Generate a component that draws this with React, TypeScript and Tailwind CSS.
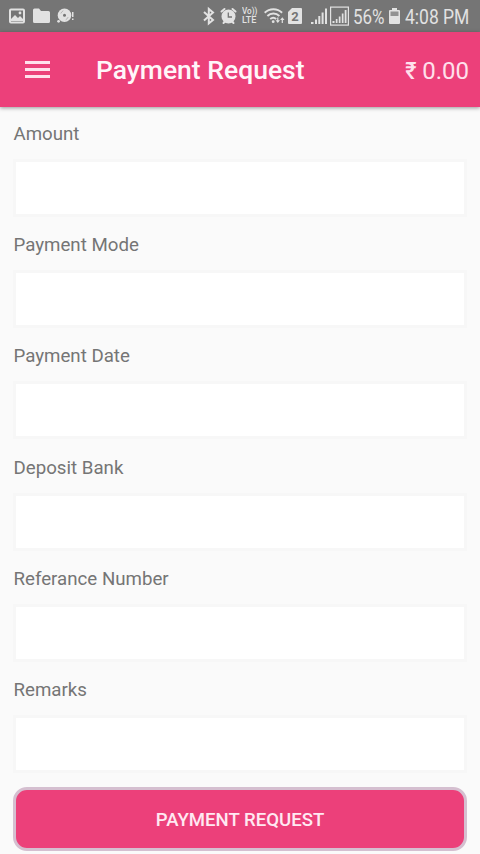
const fields = ['Amount', 'Payment Mode', 'Payment Date', 'Deposit Bank', 'Referance Number', 'Remarks'];

function StatusBar() {
  return (
    <div className="flex h-8 shrink-0 items-center bg-[#757575] text-[#e2e2e2]">
      <svg className="ml-[9px] h-8 w-4" viewBox="0 0 16 32" fill="none">
        <rect x="1" y="9.500" width="14" height="13" rx="1" stroke="currentColor" strokeWidth="2" />
        <path d="M2 21v-2l4-4 3 3 2-2 3 3v2z" fill="currentColor" />
        <circle cx="11" cy="13" r="1.400" fill="currentColor" />
      </svg>
      <svg className="ml-2 h-8 w-[17px]" viewBox="0 0 17 32" fill="currentColor">
        <path d="M1.500 8.500H6l2 2.500h7.500a1.500 1.500 0 0 1 1.500 1.500v9a1.500 1.500 0 0 1-1.500 1.500h-14A1.500 1.500 0 0 1 0 21.500V10a1.500 1.500 0 0 1 1.500-1.500z" />
      </svg>
      <svg className="ml-[7px] h-8 w-[17px]" viewBox="0 0 17 32" fill="currentColor">
        <circle cx="7.500" cy="15.300" r="6.800" />
        <circle cx="7.500" cy="15.300" r="1.500" fill="#757575" />
        <path d="M3.800 13.500q.8-2 2.500-2.800M11.200 17q-.8 2-2.500 2.800" stroke="#757575" strokeWidth=".4" fill="none" />
        <circle cx="1.600" cy="21.300" r="1.400" />
        <rect x="15" y="12" width="1.500" height="5" />
        <rect x="15" y="18.500" width="1.500" height="1.500" />
      </svg>
      <svg className="ml-auto h-8 w-3" viewBox="0 0 12 32" fill="none" stroke="currentColor" strokeWidth="2">
        <path d="M1 12l9 7.900-4.200 3.500V8.900l4.200 3.500L1 20.400" />
      </svg>
      <svg className="ml-[5px] h-8 w-[17px]" viewBox="0 0 17 32" fill="currentColor">
        <circle cx="8.500" cy="16.500" r="7" />
        <path d="M1.500 11.500l3-2.500M15.500 11.500l-3-2.500M3.500 23l2-2M13.500 23l-2-2" stroke="currentColor" strokeWidth="2" strokeLinecap="round" />
        <path d="M8.300 12.500v4.500H12" fill="none" stroke="#757575" strokeWidth="1.300" />
      </svg>
      <div className="ml-[5px] flex w-4 flex-col items-start text-[9px] leading-[9px] font-medium">
        <span className="origin-left scale-x-[0.9] whitespace-nowrap">Vo))</span>
        <span className="whitespace-nowrap">LTE</span>
      </div>
      <svg className="ml-[6px] h-8 w-[21px]" viewBox="0 0 21 32" fill="none" stroke="currentColor" strokeWidth="1.900">
        <path d="M.7 12.700a12.500 12.500 0 0 1 17.400 0M3.400 16a8.500 8.500 0 0 1 12 0M6.200 19a4.600 4.600 0 0 1 6 0" />
        <circle cx="9.200" cy="21.700" r="1.400" fill="currentColor" stroke="none" />
        <path d="M13.800 17.500v3.500M18.300 20v3" strokeWidth="1.200" />
        <path d="M11.600 20.200H16l-2.200 2.800zM16.100 20h4.400l-2.200-2.700z" fill="currentColor" stroke="none" />
      </svg>
      <svg className="ml-[3px] h-8 w-[14px]" viewBox="0 0 14 32">
        <path d="M4 8h9a1 1 0 0 1 1 1v14a1 1 0 0 1-1 1H1a1 1 0 0 1-1-1V12z" fill="currentColor" />
        <text x="7" y="20.800" textAnchor="middle" fontFamily="Roboto, sans-serif" fontSize="13" fontWeight="700" fill="#757575">2</text>
      </svg>
      <svg className="ml-[9px] h-8 w-4" viewBox="0 0 16 32" fill="currentColor">
        <path d="M0 22h2.500v2H0zM4 19.500h2V24H4zM7.300 16h2v8h-2zM10.600 12.500h2V24h-2zM14 8.500h2V24h-2z" />
      </svg>
      <svg className="ml-[3px] h-8 w-[19px]" viewBox="0 0 19 32" fill="currentColor">
        <rect x=".6" y="7.100" width="17.800" height="18" fill="none" stroke="currentColor" strokeWidth="1.200" />
        <path d="M2.500 21h2v2h-2zM5.800 19h1.700v4H5.800zM8.800 16.500h1.700V23H8.800zM11.800 13.500h1.700V23h-1.700zM14.700 10h1.800v13h-1.800z" />
      </svg>
      <div className="ml-1 w-8 pt-px text-[20px] leading-8">
        <span className="inline-block origin-left scale-x-[0.85] whitespace-nowrap">56%</span>
      </div>
      <svg className="ml-1 h-8 w-[11px]" viewBox="0 0 11 32" fill="currentColor">
        <path d="M3 8h5v2h2a1 1 0 0 1 1 1v12a1 1 0 0 1-1 1H1a1 1 0 0 1-1-1V11a1 1 0 0 1 1-1h2z" />
        <path d="M1.500 11.500h8V16h-8z" fill="#929292" />
      </svg>
      <div className="ml-[5px] mr-2.5 w-[65px] pt-px text-[20px] leading-8">
        <span className="inline-block origin-left scale-x-[0.875] whitespace-nowrap">4:08 PM</span>
      </div>
    </div>
  );
}

export default function App() {
  return (
    <div className="flex h-[854px] w-[480px] flex-col overflow-hidden bg-[#fafafa] font-['Roboto',sans-serif]">
      <StatusBar />
      <header className="flex h-[75px] shrink-0 items-center bg-[#ec407a] text-[#ffe0ec] shadow-[0_1px_4px_rgba(0,0,0,0.4)]">
        <button aria-label="Menu" className="ml-[25px] flex w-[25px] flex-col gap-1">
          <span className="h-[3px] bg-current" />
          <span className="h-[3px] bg-current" />
          <span className="h-[3px] bg-current" />
        </button>
        <h1 className="ml-[46px] whitespace-nowrap text-[26.5px] leading-8 font-medium text-[#fff5f9]">Payment Request</h1>
        <div className="ml-auto mr-[11px] flex items-baseline gap-1.5 whitespace-nowrap pt-0.5 leading-8">
          <span className="inline-block origin-right scale-x-90 text-[24px] font-medium">₹</span>
          <span className="text-[24px]">0.00</span>
        </div>
      </header>
      <main className="flex flex-col px-[13px]">
        {fields.map((name) => (
          <label key={name} className="flex h-[111.2px] shrink-0 flex-col">
            <span className="mt-[14px] ml-[0.5px] h-[38px] whitespace-nowrap text-[18.7px] leading-[27px] text-[#757575]">{name}</span>
            <input className="h-[58px] w-full border-[3px] border-[#f7f7f7] bg-white outline-none" />
          </label>
        ))}
        <button className="mt-[13px] h-[64px] rounded-[14px] border-[3px] border-[#d5bfd0] bg-[#ec407a] pt-[3px] text-[18.6px] font-medium text-[#ffe9f2]">
          PAYMENT REQUEST
        </button>
      </main>
    </div>
  );
}
